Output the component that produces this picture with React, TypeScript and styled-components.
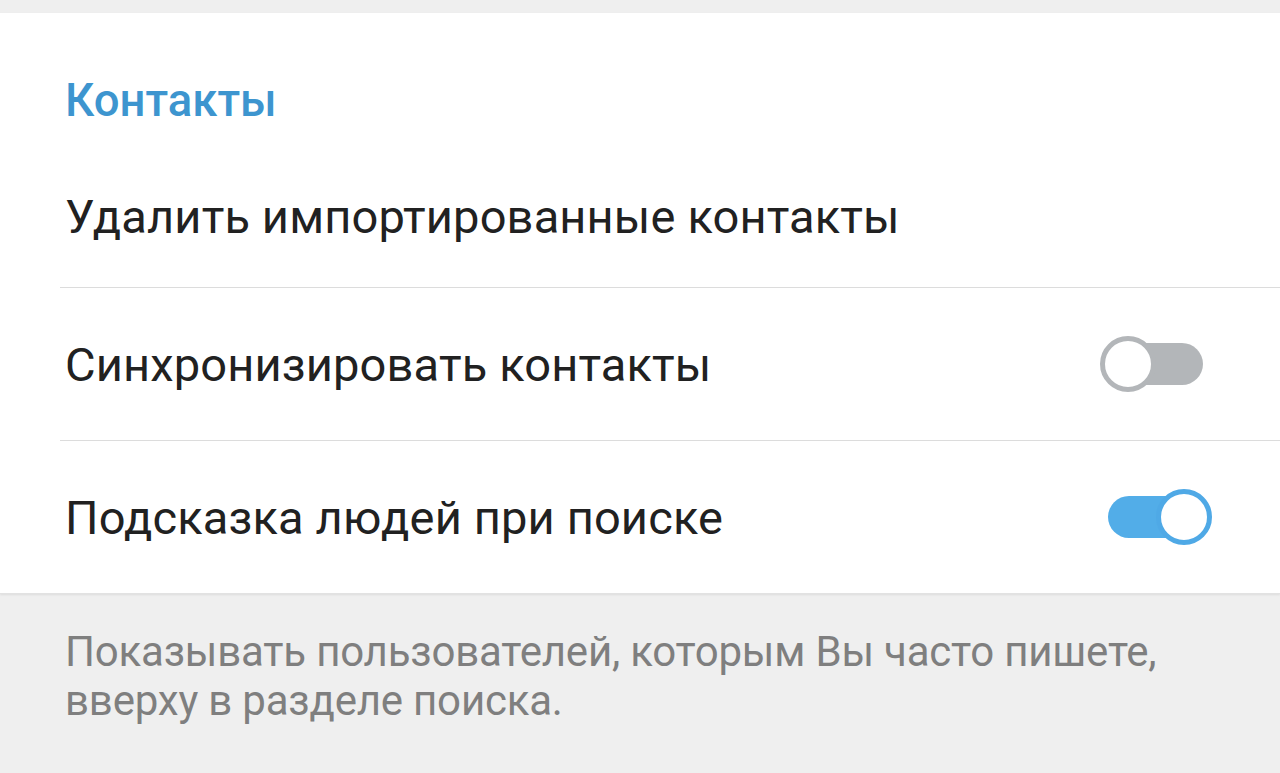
import React, { useState } from 'react';
import styled, { createGlobalStyle } from 'styled-components';

const GlobalStyle = createGlobalStyle`
  html, body {
    margin: 0;
    padding: 0;
    background: #efefef;
  }
  body {
    font-family: Roboto, "Noto Sans", "Liberation Sans", sans-serif;
    -webkit-font-smoothing: antialiased;
  }
`;

const Screen = styled.div`
  width: 1280px;
  height: 773px;
  overflow: hidden;
  background: #efefef;
  padding-top: 13px;
  box-sizing: border-box;
`;

const Card = styled.section`
  background: #ffffff;
  box-shadow: 0 1px 2px rgba(0, 0, 0, 0.08);
  border-bottom: 1px solid #e2e2e2;
`;

const SectionTitle = styled.h2`
  margin: 0;
  padding: 66px 65px 22px;
  font-size: 45.5px;
  font-weight: 500;
  line-height: 44px;
  color: #3d95cf;
`;

const Row = styled.div<{ $divider?: boolean; $h?: number }>`
  display: flex;
  align-items: center;
  justify-content: space-between;
  height: ${(p) => p.$h ?? 152}px;
  margin-left: 60px;
  padding-left: 5px;
  padding-right: 68px;
  border-top: ${(p) => (p.$divider ? '1px solid #dcdcdc' : 'none')};
`;

const Label = styled.span`
  font-size: 47px;
  color: #212121;
  letter-spacing: 0.15px;
`;

const Track = styled.button<{ $on: boolean }>`
  position: relative;
  width: 112px;
  height: 58px;
  padding: 0;
  border: none;
  background: transparent;
  cursor: pointer;

  &::before {
    content: '';
    position: absolute;
    left: 8px;
    right: 9px;
    top: 8px;
    height: 42px;
    border-radius: 21px;
    background: ${(p) => (p.$on ? '#52ade8' : '#b3b6b9')};
  }
`;

const Knob = styled.span<{ $on: boolean }>`
  position: absolute;
  top: 1px;
  left: ${(p) => (p.$on ? '56px' : '0')};
  width: 56px;
  height: 56px;
  box-sizing: border-box;
  border-radius: 50%;
  background: #ffffff;
  border: 5px solid ${(p) => (p.$on ? '#4fa9e6' : '#b3b6b9')};
`;

const Hint = styled.p`
  margin: 0;
  padding: 33px 65px;
  font-size: 42px;
  line-height: 49px;
  letter-spacing: -0.2px;
  color: #7f7f7f;
`;

function Toggle({ on, onClick }: { on: boolean; onClick: () => void }) {
  return (
    <Track $on={on} onClick={onClick} aria-pressed={on}>
      <Knob $on={on} />
    </Track>
  );
}

export default function App() {
  const [sync, setSync] = useState(false);
  const [suggest, setSuggest] = useState(true);

  return (
    <Screen>
      <GlobalStyle />
      <Card>
        <SectionTitle>Контакты</SectionTitle>
        <Row $h={142}>
          <Label>Удалить импортированные контакты</Label>
        </Row>
        <Row $divider>
          <Label>Синхронизировать контакты</Label>
          <Toggle on={sync} onClick={() => setSync(!sync)} />
        </Row>
        <Row $divider>
          <Label>Подсказка людей при поиске</Label>
          <Toggle on={suggest} onClick={() => setSuggest(!suggest)} />
        </Row>
      </Card>
      <Hint>
        Показывать пользователей, которым Вы часто пишете,
        <br />
        вверху в разделе поиска.
      </Hint>
    </Screen>
  );
}
